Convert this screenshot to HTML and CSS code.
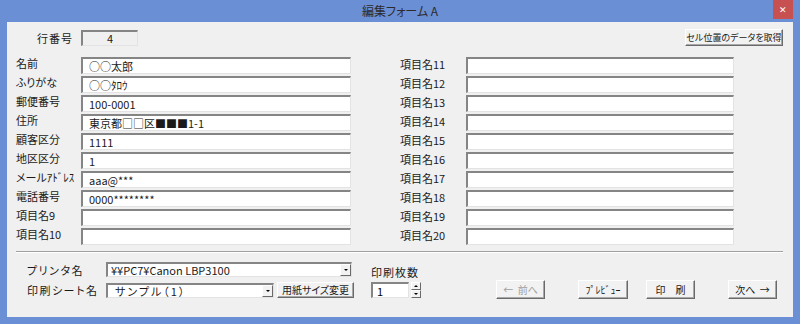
FILE: index.html
```html
<!DOCTYPE html>
<html lang="ja">
<head>
    <meta charset="UTF-8">
    <title>編集フォーム A</title>
    <link rel="stylesheet" href="styles.css">
</head>
<body>
    <div class="window">
        <div class="titlebar">
            <span class="title">編集フォーム A</span>
            <span class="close">✕</span>
        </div>
        <div class="client">
            <div class="top-row">
                <span class="rownum-label">行番号</span>
                <span class="rownum sunken">4</span>
                <button class="btn get-btn">セル位置のデータを取得</button>
            </div>

            <div class="fields">
                <div class="col col-left">
                    <span class="lbl">名前</span><input class="txt sunken" value="○○太郎">
                    <span class="lbl">ふりがな</span><input class="txt sunken" value="○○ﾀﾛｳ">
                    <span class="lbl">郵便番号</span><input class="txt sunken" value="100-0001">
                    <span class="lbl">住所</span><input class="txt sunken" value="東京都□□区■■■1-1">
                    <span class="lbl">顧客区分</span><input class="txt sunken" value="1111">
                    <span class="lbl">地区区分</span><input class="txt sunken" value="1">
                    <span class="lbl">メールｱﾄﾞﾚｽ</span><input class="txt sunken" value="aaa@***">
                    <span class="lbl">電話番号</span><input class="txt sunken" value="0000********">
                    <span class="lbl">項目名9</span><input class="txt sunken" value="">
                    <span class="lbl">項目名10</span><input class="txt sunken" value="">
                </div>
                <div class="col col-right">
                    <span class="lbl">項目名11</span><input class="txt sunken" value="">
                    <span class="lbl">項目名12</span><input class="txt sunken" value="">
                    <span class="lbl">項目名13</span><input class="txt sunken" value="">
                    <span class="lbl">項目名14</span><input class="txt sunken" value="">
                    <span class="lbl">項目名15</span><input class="txt sunken" value="">
                    <span class="lbl">項目名16</span><input class="txt sunken" value="">
                    <span class="lbl">項目名17</span><input class="txt sunken" value="">
                    <span class="lbl">項目名18</span><input class="txt sunken" value="">
                    <span class="lbl">項目名19</span><input class="txt sunken" value="">
                    <span class="lbl">項目名20</span><input class="txt sunken" value="">
                </div>
            </div>

            <div class="separator"></div>

            <div class="bottom">
                <div class="print-grid">
                    <span class="blbl">プリンタ名</span>
                    <div class="combo combo-printer sunken">
                        <span class="combo-text">¥¥PC7¥Canon LBP3100</span>
                        <span class="drop"><i class="tri-down"></i></span>
                    </div>
                    <span class="blbl">印刷シート名</span>
                    <div class="sheet-row">
                        <div class="combo combo-sheet sunken">
                            <span class="combo-text">サンプル（1）</span>
                            <span class="drop"><i class="tri-down"></i></span>
                        </div>
                        <button class="btn paper-btn">用紙サイズ変更</button>
                    </div>
                </div>

                <div class="count">
                    <span class="count-label">印刷枚数</span>
                    <div class="spin-row">
                        <input class="spin-input sunken" value="1">
                        <div class="spin">
                            <span class="spin-btn"><i class="tri-up"></i></span>
                            <span class="spin-btn"><i class="tri-down"></i></span>
                        </div>
                    </div>
                </div>

                <div class="actions">
                    <button class="btn act disabled">←&nbsp; 前へ</button>
                    <button class="btn act preview">ﾌﾟﾚﾋﾞｭｰ</button>
                    <button class="btn act print">印　刷</button>
                    <button class="btn act next">次へ&nbsp; →</button>
                </div>
            </div>
        </div>
    </div>
</body>
</html>
```

FILE: styles.css
```css
*{
    box-sizing: border-box;
}
body{
    margin: 0;
    font-family: "Noto Sans CJK JP", "Liberation Sans", sans-serif;
    font-size: 11px;
    font-feature-settings: "palt";
    color: #1a1a1a;
}
.window{
    width: 800px;
    height: 324px;
    background-color: #6b8fd5;
    padding: 0 7px 7px 7px;
    display: flex;
    flex-direction: column;
}
.titlebar{
    height: 22px;
    display: grid;
    grid-template-columns: 1fr auto 1fr;
    align-items: start;
}
.title{
    grid-column: 2;
    font-size: 12px;
    line-height: 22px;
    color: #2b2b2b;
}
.close{
    grid-column: 3;
    justify-self: end;
    width: 20px;
    height: 19px;
    background-color: #c75050;
    color: #fff;
    font-size: 9px;
    line-height: 19px;
    text-align: center;
}
.client{
    flex: 1;
    background-color: #f0f0f0;
    padding: 7px 10px 0 9px;
}

/* sunken / raised look */
.sunken{
    border-style: solid;
    border-width: 2px 1px 1px 2px;
    border-color: #858585 #e3e3e3 #e3e3e3 #858585;
}
.btn{
    font-family: inherit;
    font-size: 10px;
    font-feature-settings: "palt";
    color: #1a1a1a;
    background-color: #f2f2f2;
    border: 1px solid;
    border-color: #ffffff #6a6a6a #6a6a6a #ffffff;
    box-shadow: inset -1px -1px 0 #a8a8a8;
    padding: 0;
    line-height: 1;
    white-space: nowrap;
}

.top-row{
    display: flex;
    align-items: center;
    height: 17px;
}
.rownum-label{
    margin-left: 21px;
    width: 44px;
    letter-spacing: 1px;
}
.rownum{
    width: 57px;
    height: 16px;
    margin-top: 1px;
    text-align: center;
    line-height: 12px;
    background-color: #f0f0f0;
}
.get-btn{
    margin-left: auto;
    width: 98px;
    height: 17px;
    font-size: 9px;
}

.fields{
    display: flex;
    gap: 49px;
    margin-top: 11px;
}
.col{
    display: grid;
    grid-auto-rows: 17px;
    row-gap: 2px;
}
.col-left{
    grid-template-columns: 65px 270px;
}
.col-right{
    grid-template-columns: 66px 268px;
}
.lbl{
    align-self: start;
    line-height: 12px;
    white-space: nowrap;
}
.col-right .lbl{
    padding-top: 1px;
}
.txt{
    width: 100%;
    height: 17px;
    background-color: #fff;
    font-family: inherit;
    font-size: 11px;
    color: #1a1a1a;
    padding: 0 0 0 6px;
    outline: none;
}

.separator{
    margin-top: 6px;
    border-top: 1px solid #a0a0a0;
    border-bottom: 1px solid #ffffff;
}

.bottom{
    display: flex;
    align-items: flex-end;
    margin-top: 9px;
    padding-left: 11px;
}
.print-grid{
    display: grid;
    grid-template-columns: 79px auto;
    grid-template-rows: 15px 16px;
    row-gap: 5px;
    align-items: center;
}
.blbl{
    letter-spacing: 1.5px;
    line-height: 12px;
}
.combo{
    height: 15px;
    background-color: #fff;
    display: flex;
    align-items: stretch;
}
.combo-printer{
    width: 246px;
}
.combo-sheet{
    width: 168px;
}
.combo-text{
    flex: 1;
    padding-left: 3px;
    line-height: 12px;
    white-space: nowrap;
}
.combo-sheet .combo-text{
    padding-left: 7px;
    letter-spacing: 2px;
}
.drop{
    width: 11px;
    background-color: #f2f2f2;
    border: 1px solid;
    border-color: #ffffff #6a6a6a #6a6a6a #ffffff;
    display: flex;
    align-items: center;
    justify-content: center;
}
.tri-down{
    width: 0;
    height: 0;
    border-left: 2px solid transparent;
    border-right: 2px solid transparent;
    border-top: 2px solid #000;
}
.tri-up{
    width: 0;
    height: 0;
    border-left: 2px solid transparent;
    border-right: 2px solid transparent;
    border-bottom: 2px solid #000;
}
.sheet-row{
    display: flex;
    align-items: center;
    gap: 3px;
}
.paper-btn{
    width: 77px;
    height: 16px;
}

.count{
    margin-left: 17px;
    display: flex;
    flex-direction: column;
    gap: 3px;
}
.count-label{
    letter-spacing: 1px;
    line-height: 13px;
}
.spin-row{
    display: flex;
    gap: 2px;
}
.spin-input{
    width: 38px;
    height: 16px;
    background-color: #fff;
    font-family: inherit;
    font-size: 11px;
    padding: 0 0 0 4px;
    outline: none;
}
.spin{
    width: 10px;
    height: 16px;
    display: flex;
    flex-direction: column;
}
.spin-btn{
    flex: 1;
    background-color: #f2f2f2;
    border: 1px solid;
    border-color: #ffffff #6a6a6a #6a6a6a #ffffff;
    display: flex;
    align-items: center;
    justify-content: center;
}

.actions{
    display: flex;
    margin-left: 75px;
    margin-bottom: -1px;
}
.act{
    width: 49px;
    height: 19px;
}
.preview{
    width: 50px;
    margin-left: 33px;
}
.print{
    margin-left: 18px;
}
.next{
    margin-left: 33px;
}
.disabled{
    color: #a0a0a0;
}
```
